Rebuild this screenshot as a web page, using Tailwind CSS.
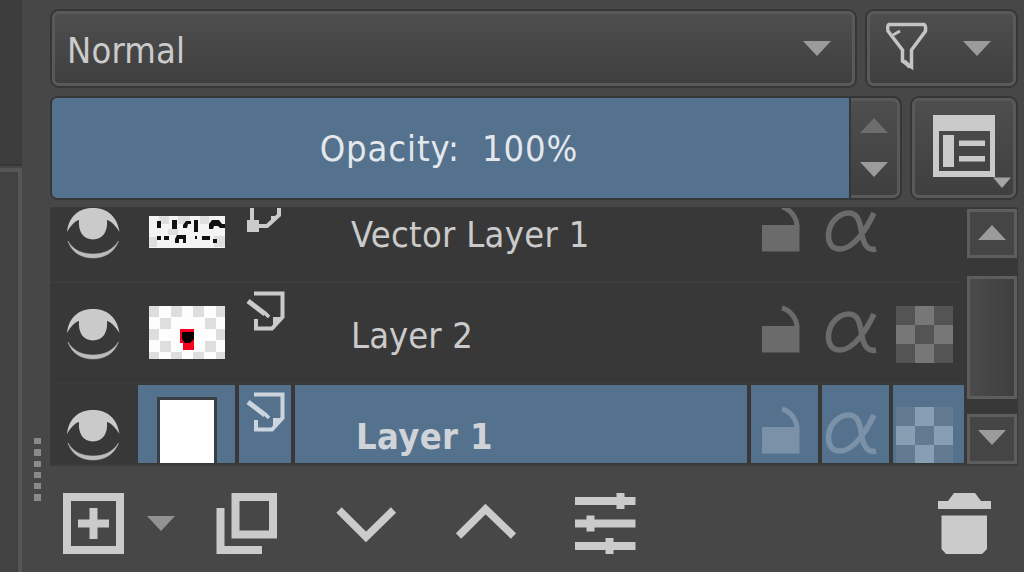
<!DOCTYPE html>
<html lang="en">
<head>
    <meta charset="UTF-8">
    <meta name="viewport" content="width=device-width, initial-scale=1.0">
    <title>Layers</title>
    <script src="https://cdn.jsdelivr.net/npm/@tailwindcss/browser@4"></script>
</head>
<body class="bg-[#474747] overflow-hidden font-['DejaVu_Sans_Condensed','DejaVu_Sans',sans-serif] [font-stretch:condensed] text-[36px] leading-none text-[#cbcbcb]">
    <!-- Shared icons, drawn in the coordinates of a layer row -->
    <svg class="hidden">
        <symbol id="eye" viewBox="50 283 88 101">
            <path d="M67 333 C69 316 80 309 93 309 C106 309 117 316 119.500 333 C115 326 111 322 107 321 C108 332 103 340.500 93 340.500 C83 340.500 78 332 79 321 C75 322 71 326 67 333Z" fill="#cacaca"/>
            <path d="M68 342 C73 351 82 355 93 355 C104 355 113 351 118.500 342 C114 354 104 359 93 359 C82 359 72 354 68 342Z" fill="#bcbcbc" stroke="#bcbcbc" stroke-width=".5"/>
        </symbol>
        <symbol id="paint" viewBox="239 283 52 101">
            <path d="M254 293.500 H282.500 V317 L272 328.500 H256 V319" fill="none" stroke="currentColor" stroke-width="4"/>
            <path d="M282 317 H273 V327Z" fill="currentColor"/>
            <path d="M248 301 L265 314" stroke="currentColor" stroke-width="5"/>
            <path d="M265 313 L269 317" stroke="currentColor" stroke-width="3.500"/>
        </symbol>
        <symbol id="lock" viewBox="751 283 67 101">
            <path d="M762 326 H799.500 V352.500 H762Z" fill="currentColor"/>
            <path d="M782 308 C790 310 796.500 318 797 327" fill="none" stroke="currentColor" stroke-width="5"/>
        </symbol>
        <symbol id="alpha" viewBox="822 283 67 101">
            <path d="M874 314 C867 329 854 350 840 350 C831 350 828 343 828.500 335 C829.500 323 839 314 849 314 C858 314 860 323 862 336 C864 346 868 352 876 350" fill="none" stroke="currentColor" stroke-width="5.500"/>
        </symbol>
        <symbol id="arrow-down" viewBox="0 0 28 15"><path d="M0 0 H28 L14 15Z" fill="currentColor"/></symbol>
        <symbol id="arrow-up" viewBox="0 0 28 15"><path d="M0 15 H28 L14 0Z" fill="currentColor"/></symbol>
    </svg>

    <div class="flex w-[1024px] h-[572px]">
        <!-- Neighbouring dock -->
        <div class="w-[22px] shrink-0 flex flex-col">
            <div class="h-[166px] bg-[#3d3d3d] border-b-2 border-[#363636]"></div>
            <div class="flex-1 mt-[2px] border-t-4 border-r-4 border-[#565656] bg-[#424242]"></div>
        </div>

        <!-- Splitter handle -->
        <div class="w-[28px] shrink-0 flex flex-col pl-[12px] pt-[438px] gap-[5px]">
            <i class="w-[7px] h-[6.300px] bg-[#8a8a8a]"></i>
            <i class="w-[7px] h-[6.300px] bg-[#8a8a8a]"></i>
            <i class="w-[7px] h-[6.300px] bg-[#8a8a8a]"></i>
            <i class="w-[7px] h-[6.300px] bg-[#8a8a8a]"></i>
            <i class="w-[7px] h-[6.300px] bg-[#8a8a8a]"></i>
            <i class="w-[7px] h-[6.300px] bg-[#8a8a8a]"></i>
        </div>

        <div class="w-[968px] shrink-0 flex flex-col">
            <!-- Blend mode and filter -->
            <div class="flex gap-[8px] pt-[9px] h-[88px]">
                <button class="w-[807px] border-2 border-[#363636] rounded-[9px]">
                    <span class="flex items-center justify-between h-full border-3 border-[#595959] rounded-[7px] bg-linear-to-b from-[#4e4e4e] to-[#3f3f3f] pl-[12px] pr-[21px]">
                        <span class="pt-[5px] tracking-[0.2px]">Normal</span>
                        <svg class="w-[28px] h-[15px] mb-[1px] text-[#9b9b9b]"><use href="#arrow-down"/></svg>
                    </span>
                </button>
                <button class="w-[153px] border-2 border-[#363636] rounded-[9px]">
                    <span class="flex items-center justify-between h-full border-3 border-[#595959] rounded-[7px] bg-linear-to-b from-[#4e4e4e] to-[#3f3f3f] pl-[14px] pr-[22px]">
                        <svg class="w-[44px] h-[52px] mb-[4px]" viewBox="884 21 44 52" fill="none" stroke="#c4c4c4" stroke-width="3.500">
                            <path d="M889 24.500 H924 Q926 25 925.500 31 L911.500 50 V67 L902.500 61 V50 L888 31 Q887 26 889 24.500Z"/>
                            <path d="M893 35 L900 31" stroke-width="3"/>
                            <path d="M904 61 L910 67" stroke-width="4"/>
                        </svg>
                        <svg class="w-[28px] h-[15px] mb-[1px] text-[#9b9b9b]"><use href="#arrow-down"/></svg>
                    </span>
                </button>
            </div>

            <!-- Opacity slider -->
            <div class="flex gap-[8px] pt-[8px] h-[112px]">
                <div class="w-[852px] flex border-2 border-[#363636] rounded-[8px] bg-[#363636]">
                    <div class="w-[797px] flex items-center justify-center rounded-l-[5px] bg-[#54728e] text-[#e4e8ec] whitespace-pre pt-[1px] pr-[3px] tracking-[0.9px]">Opacity:  100%</div>
                    <div class="ml-[2px] flex-1 flex flex-col items-center gap-[29px] pt-[17px] border-3 border-l-0 border-[#595959] rounded-r-[7px] bg-linear-to-b from-[#4e4e4e] to-[#3f3f3f]">
                        <svg class="w-[28px] h-[15px] text-[#6d6d6d]"><use href="#arrow-up"/></svg>
                        <svg class="w-[28px] h-[15px] text-[#9b9b9b]"><use href="#arrow-down"/></svg>
                    </div>
                </div>
                <button class="w-[108px] border-2 border-[#363636] rounded-[9px]">
                    <span class="block h-full border-3 border-[#595959] rounded-[7px] bg-linear-to-b from-[#4e4e4e] to-[#3f3f3f]">
                        <svg class="w-[98px] h-[94px]" viewBox="915 101 98 94">
                            <path d="M933 115 H995 V177 H933Z M939 131 V171 H990 V131Z" fill="#cacaca" fill-rule="evenodd"/>
                            <path d="M943 135 H954 V167 H943Z M959 140.500 H985 V146 H959Z M959 156 H985 V161.500 H959Z" fill="#cacaca"/>
                            <path d="M993 177.500 H1011 L1002 188Z" fill="#a4a4a4"/>
                        </svg>
                    </span>
                </button>
            </div>

            <!-- Layer list -->
            <div class="mt-[7px] h-[259px] flex bg-[#383838] border-t border-b-2 border-[#3b3b3b]">
                <div class="w-[914px] h-[255px] overflow-hidden text-[#cbcbcb]">
                    <div class="-mt-[26px] h-[101px] flex gap-[4px] border-b-2 border-[#3c3c3c]">
                        <svg class="w-[88px] h-[101px] -mr-[4px] shrink-0"><use href="#eye"/></svg>
                        <svg class="w-[97px] h-[101px] shrink-0" viewBox="138 182 97 101">
                            <path d="M149 216 H225 V248 H149Z" fill="#f4f4f4"/>
                            <path d="M159 216h10v8h-10z M178 216h12v8h-12z M149 237h8v10h-8z M200 216h9v8h-9z M214 236h11v11h-11z M168 229h10v6h-10z" fill="#dedede"/>
                            <path d="M157 221h4v7h-4z M172 220h5v9h-5z M183 225l3-4h5v3h-3l-1 4h-4z M194 220h4v12h-4z M209 229v-5l3-4h7l3 4h3v4h-5l-2-2h-4l-1 3z M157 236h4v4h-4z M164 236h5v4h-5z M175 243v-4l2-4h9v8h-3v-4h-4v4z M202 236h8v4h-8z M213 239h4v4h-4z M195 236h2v3h-2z" fill="#111"/>
                        </svg>
                        <svg class="w-[52px] h-[101px] shrink-0" viewBox="239 182 52 101">
                            <path d="M247 220 H259 V232 H247Z" fill="#cbcbcb"/>
                            <path d="M252 200 V222 M258 226 H267 L279 215 V200" fill="none" stroke="#cbcbcb" stroke-width="4"/>
                            <path d="M279 216 H271 V225Z" fill="#cbcbcb"/>
                        </svg>
                        <div class="w-[452px] flex items-center pl-[56px] pt-[6px] whitespace-pre tracking-[0.3px]">Vector Layer 1</div>
                        <svg class="w-[67px] h-[101px] shrink-0 text-[#6b6b6b]"><use href="#lock"/></svg>
                        <svg class="w-[67px] h-[101px] shrink-0 text-[#6b6b6b]"><use href="#alpha"/></svg>
                    </div>
                    <div class="h-[101px] flex gap-[4px] border-b border-[#3c3c3c]">
                        <svg class="w-[88px] h-[101px] -mr-[4px] shrink-0"><use href="#eye"/></svg>
                        <svg class="w-[97px] h-[101px] shrink-0" viewBox="138 283 97 101">
                            <path d="M149 306 H225 V359 H149Z" fill="#fdfdfd"/>
                            <path d="M149 306h10v11h-10z M171 306h11v11h-11z M193 306h11v11h-11z M216 306h9v11h-9z M160 318h11v11h-11z M205 318h11v11h-11z M149 329h10v11h-10z M216 329h9v11h-9z M160 341h11v11h-11z M205 341h11v11h-11z M149 352h10v7h-10z M171 352h11v7h-11z M193 352h11v7h-11z M216 352h9v7h-9z" fill="#dedede"/>
                            <path d="M180 329h14v21h-11v-7h-3z" fill="#f8001e"/>
                            <path d="M182 332h12v7l-4 4h-5l-3-4z" fill="#060000"/>
                        </svg>
                        <svg class="w-[52px] h-[101px] shrink-0"><use href="#paint"/></svg>
                        <div class="w-[452px] flex items-center pl-[56px] pt-[5px] whitespace-pre tracking-[0.1px]">Layer 2</div>
                        <svg class="w-[67px] h-[101px] shrink-0 text-[#6b6b6b]"><use href="#lock"/></svg>
                        <svg class="w-[67px] h-[101px] shrink-0 text-[#6b6b6b]"><use href="#alpha"/></svg>
                        <svg class="w-[71px] h-[101px] shrink-0" viewBox="893 283 71 101">
                            <path d="M896 306h57v57h-57z" fill="#545454"/>
                            <path d="M915 306h19v19h-19z M896 325h19v19h-19z M934 325h19v19h-19z M915 344h19v19h-19z" fill="#777"/>
                        </svg>
                    </div>
                    <!-- Selected layer -->
                    <div class="h-[102px] flex gap-[4px] pt-px">
                        <svg class="w-[88px] h-[101px] -mt-px -mr-[4px] shrink-0"><use href="#eye"/></svg>
                        <div class="w-[97px] flex justify-center bg-[#54728e] pt-[12px]">
                            <div class="w-[60px] border-3 border-[#3a3f44] bg-white"></div>
                        </div>
                        <div class="w-[52px] bg-[#54728e] text-[#ccd5de]">
                            <svg class="w-[52px] h-[101px] -mt-px"><use href="#paint"/></svg>
                        </div>
                        <div class="w-[452px] flex items-center bg-[#54728e] pl-[61px] pt-[3px] font-bold whitespace-pre tracking-[0.4px] text-[#d0d4d8]">Layer 1</div>
                        <div class="w-[67px] bg-[#54728e] text-[#7b91a7]">
                            <svg class="w-[67px] h-[101px] -mt-px"><use href="#lock"/></svg>
                        </div>
                        <div class="w-[67px] bg-[#54728e] text-[#7b91a7]">
                            <svg class="w-[67px] h-[101px] -mt-px"><use href="#alpha"/></svg>
                        </div>
                        <div class="w-[71px] bg-[#54728e]">
                            <svg class="w-[71px] h-[101px] -mt-px" viewBox="893 283 71 101">
                                <path d="M896 306h57v57h-57z" fill="#647a91"/>
                                <path d="M915 306h19v19h-19z M896 325h19v19h-19z M934 325h19v19h-19z M915 344h19v19h-19z" fill="#889eb3"/>
                            </svg>
                        </div>
                    </div>
                </div>

                <!-- Scrollbar -->
                <div class="w-[50px] ml-[3px] h-[256px] shrink-0 flex flex-col pt-px">
                    <div class="h-[49px] flex items-center justify-center border-3 border-[#5d5d5d] bg-[#454545]">
                        <svg class="w-[28px] h-[15px] mt-[-3px] text-[#9b9b9b]"><use href="#arrow-up"/></svg>
                    </div>
                    <div class="mt-[18px] h-[123px] border-3 border-[#5d5d5d] bg-linear-to-r from-[#4b4b4b] to-[#3f3f3f]"></div>
                    <div class="mt-[15px] h-[50px] flex items-center justify-center border-3 border-[#5d5d5d] bg-[#454545]">
                        <svg class="w-[28px] h-[15px] mt-[-4px] text-[#9b9b9b]"><use href="#arrow-down"/></svg>
                    </div>
                </div>
            </div>

            <!-- Toolbar -->
            <div class="flex-1 flex items-start pl-[13px] pr-[25px] pt-[27px]">
                <svg class="w-[62px] h-[62px]" viewBox="63 493 62 62" fill="none" stroke="#cbcbcb" stroke-width="8">
                    <path d="M67 497 H120 V550 H67Z M78 523.500 H109 M93.500 508 V539"/>
                </svg>
                <svg class="w-[28px] h-[15px] ml-[22px] mt-[23px] text-[#929292]"><use href="#arrow-down"/></svg>
                <svg class="w-[62px] h-[62px] ml-[41px]" viewBox="216 493 62 62" fill="none" stroke="#cbcbcb" stroke-width="8">
                    <path d="M235.500 497 H273 V534.500 H235.500Z M220.500 508 V550 H262"/>
                </svg>
                <svg class="w-[62px] h-[62px] ml-[57px]" viewBox="335 493 62 62" fill="none" stroke="#cbcbcb" stroke-width="7.500">
                    <path d="M339 510 L366 537 L393.500 510"/>
                </svg>
                <svg class="w-[62px] h-[62px] ml-[58px]" viewBox="455 493 62 62" fill="none" stroke="#cbcbcb" stroke-width="7.500">
                    <path d="M458.500 536 L485.500 509 L513.500 536"/>
                </svg>
                <svg class="w-[62px] h-[62px] ml-[57px]" viewBox="574 493 62 62" fill="none" stroke="#cbcbcb" stroke-width="8">
                    <path d="M575 501 H635.500 M575 523.500 H635.500 M575 546 H635.500 M620.500 493 V509 M590.500 515.500 V531.500 M609.500 538 V554"/>
                </svg>
                <svg class="w-[56px] h-[62px] ml-auto" viewBox="937 493 56 62" fill="#cbcbcb">
                    <path d="M938 501 H948 L954 493 H975 L981 501 H991 V509 H938Z M941.500 515.500 H987 V549 L982 554 H946 L941.500 549Z"/>
                </svg>
            </div>
        </div>
    </div>
</body>
</html>
